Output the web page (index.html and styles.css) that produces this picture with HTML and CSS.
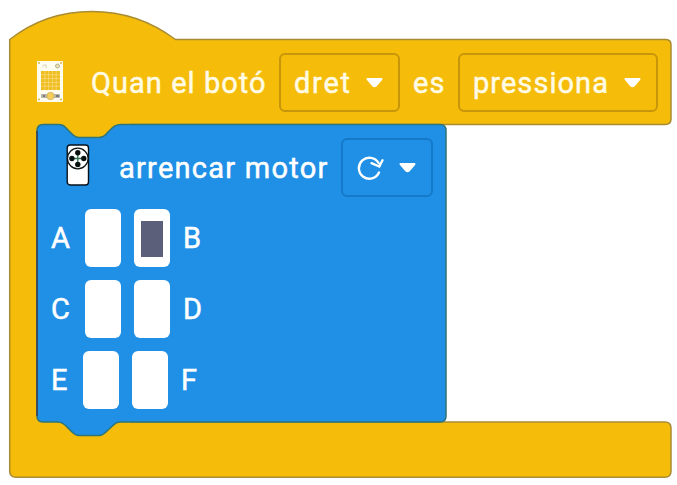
FILE: index.html
```
<!DOCTYPE html>
<html lang="ca">
<head>
<meta charset="utf-8">
<title>Blocs</title>
<link rel="stylesheet" href="styles.css">
</head>
<body>
<main class="workspace">
  <svg class="shapes" width="677" height="485" viewBox="0 0 677 485" aria-hidden="true">
    <path class="event-shape" d="M9.700 39.500C57 2 126 2 175.500 39.500H666Q671 39.500 671 45V119Q671 124.500 665 124.500H37V422H665Q671 422 671 428V471Q671 477.300 665 477.300H16Q9.700 477.300 9.700 471Z"/>
    <path class="event-fill" d="M35 120H130V430H35Z"/>
    <path class="motor-shape" d="M37 131Q37 124.500 43 124.500H58C64 124.500 65 127 70 132Q75 137.500 79 137.500H99Q104 137.500 108 132C113 127 115 124.500 121 124.500H440Q446 124.500 446 130.500V416Q446 422 440 422H121C115 422 114 425 108 430Q103 435.500 99 435.500H79Q75 435.500 70 430C65 425 63 422 57 422H43Q37 422 37 416Z"/>
    <path class="motor-edge" d="M37 131V416"/>
  </svg>

  <section class="row event-row">
    <svg class="board-icon" width="28" height="42" viewBox="0 0 28 42">
      <rect x="1" y="1" width="26" height="41" rx="1" fill="#fffdf0"/>
      <g fill="#d9b64a"><circle cx="3" cy="3" r="1"/><circle cx="25" cy="3" r="1"/><circle cx="3" cy="39.500" r="1"/><circle cx="25" cy="39.500" r="1"/></g>
      <path d="M7.500 5H10M10 5V8M7 5.500V7" fill="none" stroke="#c9c2a5" stroke-width=".8"/>
      <circle cx="21.500" cy="6" r="2" fill="#e9dfb4" stroke="#a8a27c" stroke-width=".8"/>
      <rect x="5" y="11" width="19" height="19" fill="#f0bd1e"/>
      <path d="M8.800 11V30M12.600 11V30M16.400 11V30M20.200 11V30M5 14.800H24M5 18.600H24M5 22.400H24M5 26.200H24" stroke="#f8dc82" stroke-width=".7"/>
      <rect x="5" y="34" width="19" height="4" rx=".8" fill="#b9b6ac"/>
      <path d="M7 36H9M20 36H23" stroke="#64616b" stroke-width="1.500"/>
      <circle cx="14.500" cy="36" r="3.700" fill="#f5ce58" stroke="#c8ad60" stroke-width=".7"/>
    </svg>
    <span class="text quan">Quan el botó</span>
    <div class="dropdown side"><span class="text">dret</span><svg class="caret" width="19" height="14" viewBox="0 0 19 14"><path d="M2.500 3H16.500L11 9.500Q9.500 11 8 9.500Z"/></svg></div>
    <span class="text es">es</span>
    <div class="dropdown action"><span class="text">pressiona</span><svg class="caret" width="19" height="14" viewBox="0 0 19 14"><path d="M2.500 3H16.500L11 9.500Q9.500 11 8 9.500Z"/></svg></div>
  </section>

  <section class="row motor-row">
    <svg class="motor-icon" width="24" height="42" viewBox="0 0 24 42">
      <rect x="1.200" y="1" width="21.300" height="40" rx="3" fill="#fff" stroke="#07111b" stroke-width="1.400"/>
      <circle cx="11.800" cy="14.500" r="10.300" fill="#fff" stroke="#101613" stroke-width="1.200"/>
      <path d="M8 14.500H15.500M11.800 10.500V18.500" stroke="#31714f" stroke-width="1.300"/>
      <g fill="#07100c"><circle cx="11.800" cy="8.700" r="2.700"/><circle cx="11.800" cy="20.500" r="2.700"/><circle cx="5.900" cy="14.500" r="2.700"/><circle cx="17.800" cy="14.500" r="2.700"/></g>
    </svg>
    <span class="text arrencar">arrencar motor</span>
    <div class="dropdown turn">
      <svg class="rotate" width="28" height="28" viewBox="0 0 28 28"><path d="M23 18.500A10.500 10.500 0 1 1 22.500 9M15.500 9.200L23.300 12.500L26.500 6.200"/></svg>
      <svg class="caret" width="19" height="14" viewBox="0 0 19 14"><path d="M2.500 3H16.500L11 9.500Q9.500 11 8 9.500Z"/></svg>
    </div>
  </section>

  <section class="ports">
    <div class="port-row"><span class="text port">A</span><i class="socket"></i><i class="socket selected"></i><span class="text port">B</span></div>
    <div class="port-row"><span class="text port">C</span><i class="socket"></i><i class="socket"></i><span class="text port">D</span></div>
    <div class="port-row last"><span class="text port">E</span><i class="socket"></i><i class="socket"></i><span class="text port">F</span></div>
  </section>
</main>
</body>
</html>
```
FILE: styles.css
```
* { box-sizing: border-box; }
body { margin: 0; background: #fff; }
.workspace {
  position: relative;
  width: 677px;
  height: 485px;
  overflow: hidden;
  font: 400 29px/36px Roboto, sans-serif;
  color: #fffff5;
}
.shapes { position: absolute; inset: 0; }
.event-shape { fill: #f5bc0a; stroke: #a98c32; stroke-width: 1.5; }
.event-fill { fill: #f5bc0a; }
.motor-shape { fill: #1f90e6; stroke: #2e7478; stroke-width: 1.5; }
.motor-edge { fill: none; stroke: #3c3c55; stroke-width: 1.5; }
.row { position: relative; display: flex; align-items: center; height: 59px; }
.text { white-space: nowrap; -webkit-text-stroke: .5px currentColor; }
.event-row { margin-top: 53px; padding-left: 36px; color: #fffbe4; }
.board-icon { margin: -4px 27px 0 0; }
.quan { width: 188px; letter-spacing: 1.05px; }
.dropdown {
  display: flex;
  align-items: center;
  justify-content: space-between;
  height: 59px;
  border: 2px solid #c8960a;
  border-radius: 6px;
  padding: 0 13px;
}
.side { width: 121px; letter-spacing: 1.75px; }
.es { width: 58px; padding-left: 13px; letter-spacing: 1px; }
.action { width: 200px; letter-spacing: 1.05px; }
.side .caret, .action .caret { margin-right: 1px; }
.caret { display: block; flex: none; fill: #fff; stroke: #fff; stroke-width: 2; stroke-linejoin: round; }
.motor-row { margin-top: 26px; padding-left: 66px; color: #fff; }
.motor-icon { margin: -5px 29px 0 0; }
.arrencar { width: 222px; letter-spacing: 1.25px; }
.turn { width: 92px; border-color: #1678c8; padding-right: 14px; }
.rotate { fill: none; stroke: #fff; stroke-width: 2.4; stroke-linecap: round; }
.ports { position: relative; display: grid; gap: 13px; padding: 12px 0 0 51px; }
.port-row { display: flex; align-items: center; height: 58px; gap: 13px; color: #fff; }
.port { width: 21px; }
.last .port { width: 19px; }
.socket { display: flex; width: 36px; height: 58px; padding: 12px 7px 10px; background: #fff; border-radius: 6px; }
.selected::before { content: ""; width: 22px; height: 36px; background: #5b5f7a; }
```
